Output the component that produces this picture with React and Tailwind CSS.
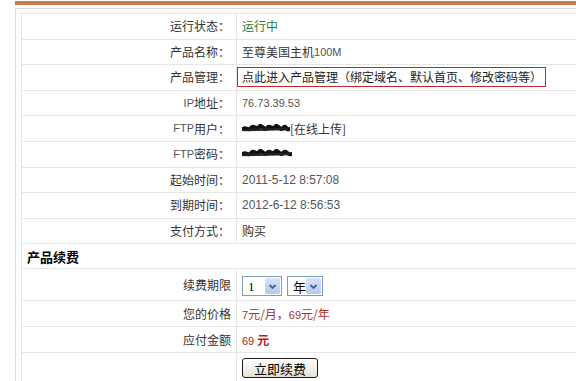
import React from 'react';

const cjk = "font-['Noto_Sans_CJK_SC',sans-serif]";
const arial = "font-['Liberation_Sans',Arial,sans-serif]";

function Scribble({ width = 50 }) {
  return (
    <svg width={width} height="10" viewBox={`0 0 ${width} 10`} className="inline-block align-middle">
      <path
        d={`M1 5 C4 2 6 8 9 4 S14 7 17 3 S22 8 25 4 S30 7 33 3 S38 8 41 4 S${width - 4} 7 ${width - 1} 5`}
        stroke="#111"
        strokeWidth="4"
        fill="none"
        strokeLinecap="round"
      />
      <path
        d={`M3 6 L${width - 3} 5`}
        stroke="#222"
        strokeWidth="2.5"
        fill="none"
        strokeLinecap="round"
      />
    </svg>
  );
}

// full-width punctuation box, so the browser can't squeeze it
function P({ children }) {
  return <span className="inline-block w-[12px] text-center">{children}</span>;
}

function InfoRow({ label, children }) {
  return (
    <div className="flex h-[25.6px] border-b border-[#e6e6e6]">
      <div className="w-[215px] shrink-0 border-r border-[#e6e6e6] flex items-center justify-end pr-[6px] text-[12px] text-[#333]">
        {label}
      </div>
      <div className="flex-1 flex items-center pl-[5px] text-[12px] text-[#333]">{children}</div>
    </div>
  );
}

function RenewRow({ label, h, children }) {
  return (
    <div className={`flex ${h} border-b border-[#e6e6e6]`}>
      <div className="w-[215px] shrink-0 border-r border-[#e6e6e6] flex items-center justify-end pr-[5px] text-[12px] text-[#333]">
        {label}
      </div>
      <div className="flex-1 flex items-center pl-[5px] text-[12px] text-[#333]">{children}</div>
    </div>
  );
}

function FakeSelect({ value, w }) {
  return (
    <div className={`flex items-center ${w} h-[20px] border border-[#7f9db9] bg-white`}>
      <span className="flex-1 pl-[5px] text-[13px] leading-none text-black">{value}</span>
      <span className="mr-px w-[15px] h-[16px] rounded-[2px] bg-gradient-to-b from-[#d7e3fb] to-[#b4c8f2] flex items-center justify-center">
        <svg width="9" height="7" viewBox="0 0 9 7">
          <path d="M1.5 2 L4.5 5 L7.5 2" stroke="#4d6185" strokeWidth="1.8" fill="none" />
        </svg>
      </span>
    </div>
  );
}

export default function App() {
  return (
    <div className={`w-[576px] h-[381px] overflow-hidden bg-white ${cjk}`}>
      <div className="ml-[15px] mt-px h-[4px] bg-[#c67a4f]" />
      <div className="ml-[15px] mt-[3px] h-[400px] border-l border-t border-[#dadada] pl-[5px] pt-[4px]">
        <div className="border-l border-t border-[#e6e6e6]">
          <InfoRow label="运行状态：">
            <span className="text-[#2e7d32]">运行中</span>
          </InfoRow>
          <InfoRow label="产品名称：">
            至尊美国主机<span className={`${arial} text-[11px] text-[#555]`}>100M</span>
          </InfoRow>
          <InfoRow label="产品管理：">
            <span className="-ml-[5px] h-[20px] w-[309px] border border-[#c0272d] flex items-center pl-[4px] text-[#222] whitespace-nowrap">
              点此进入产品管理<P>（</P>绑定域名<P>、</P>默认首页<P>、</P>修改密码等<P>）</P>
            </span>
          </InfoRow>
          <InfoRow label={<><span className={`${arial} text-[11px] text-[#555]`}>IP</span>地址：</>}>
            <span className={`${arial} text-[11px] text-[#555]`}>76.73.39.53</span>
          </InfoRow>
          <InfoRow label={<><span className={`${arial} text-[11px] text-[#555]`}>FTP</span>用户：</>}>
            <Scribble width={48} />
            <span className="text-[#333]">[在线上传]</span>
          </InfoRow>
          <InfoRow label={<><span className={`${arial} text-[11px] text-[#555]`}>FTP</span>密码：</>}>
            <Scribble width={50} />
          </InfoRow>
          <InfoRow label="起始时间：">
            <span className={`${arial} text-[12px] text-[#555]`}>2011-5-12 8:57:08</span>
          </InfoRow>
          <InfoRow label="到期时间：">
            <span className={`${arial} text-[12px] text-[#555]`}>2012-6-12 8:56:53</span>
          </InfoRow>
          <InfoRow label="支付方式：">购买</InfoRow>

          <div className="h-[25px] border-b border-[#e6e6e6] flex items-center pl-[5px] text-[13px] font-bold text-black">
            产品续费
          </div>

          <RenewRow label="续费期限" h="h-[32px]">
            <div className="flex items-center gap-[5px] pt-[3px]">
              <FakeSelect value={<span className="font-['Liberation_Serif',serif]">1</span>} w="w-[40px]" />
              <FakeSelect value="年" w="w-[36px]" />
            </div>
          </RenewRow>
          <RenewRow label="您的价格" h="h-[26px]">
            <span className="text-[#a0342c] whitespace-nowrap">
              <span className={`${arial} text-[11px]`}>7</span>元/月<P>，</P><span className={`${arial} text-[11px]`}>69</span>元/年
            </span>
          </RenewRow>
          <RenewRow label="应付金额" h="h-[26px]">
            <span className="text-[#b22222]">
              <span className={`${arial} text-[11px]`}>69 </span>
              <span className="font-bold">元</span>
            </span>
          </RenewRow>
          <RenewRow label="" h="h-[40px]">
            <div className="self-start mt-[5px] w-[76px] h-[20px] rounded-[3px] border border-[#1c1c1c] bg-gradient-to-b from-white to-[#e4e1d6] flex items-center justify-center text-[13px] text-black">
              立即续费
            </div>
          </RenewRow>
        </div>
      </div>
    </div>
  );
}
